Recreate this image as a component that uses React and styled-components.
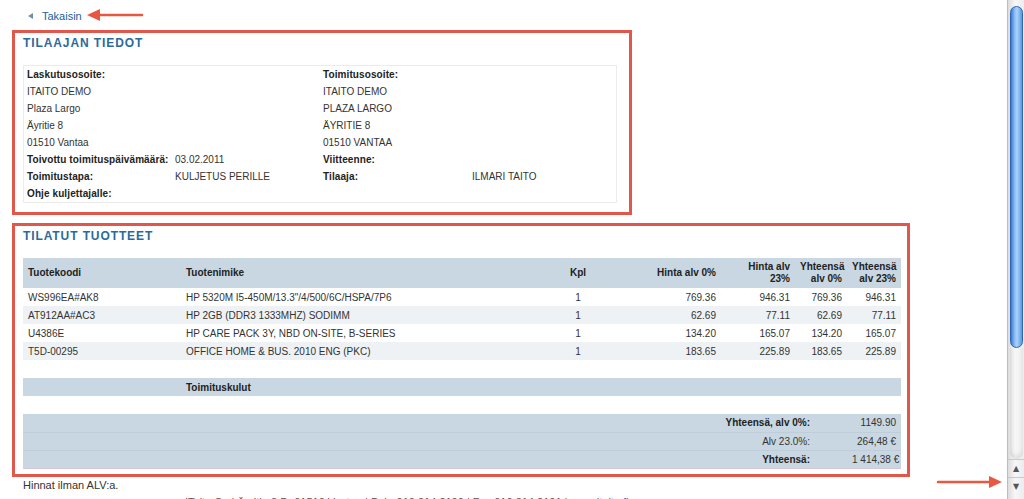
import React from 'react';
import styled, { createGlobalStyle } from 'styled-components';

const GlobalStyle = createGlobalStyle`
  html, body {
    margin: 0;
    padding: 0;
    background: #fff;
    overflow: hidden;
  }
  body {
    font-family: 'Liberation Sans', Arial, sans-serif;
    color: #2b2b2b;
  }
`;

const Screen = styled.div`
  position: relative;
  display: flex;
  width: 1024px;
  height: 499px;
  overflow: hidden;
`;

const Main = styled.div`
  flex: 1;
  padding: 9px 0 0 12px;
  overflow: hidden;
`;

const BackRow = styled.div`
  display: flex;
  align-items: center;
  height: 14px;
  padding-left: 16px;
  gap: 9px;
`;

const BackTriangle = styled.span`
  width: 0;
  height: 0;
  border-top: 3px solid transparent;
  border-bottom: 3px solid transparent;
  border-right: 5px solid #6f8fae;
`;

const BackLink = styled.a`
  font-size: 11px;
  color: #22609a;
  text-decoration: none;
`;

const Section = styled.section`
  width: ${(p) => p.$width}px;
  margin-top: ${(p) => p.$top}px;
  border: 3px solid #e2574b;
  padding: 0 0 ${(p) => p.$bottom}px 8px;
  box-sizing: border-box;
`;

const Heading = styled.h2`
  margin: 0;
  height: 32px;
  padding-top: 4px;
  box-sizing: border-box;
  font-size: 12px;
  font-weight: bold;
  letter-spacing: 0.9px;
  color: #2a6a9c;
  line-height: 12px;
`;

const InfoBox = styled.div`
  width: 594px;
  box-sizing: border-box;
  border: 1px solid #ececec;
  padding: 0 0 0 3px;
  display: grid;
  grid-template-columns: 148px 148px 149px 1fr;
  grid-auto-rows: 17px;
  align-items: center;
  font-size: 10px;
`;

const InfoCell = styled.div`
  white-space: nowrap;
  font-weight: ${(p) => (p.$bold ? 'bold' : 'normal')};
  letter-spacing: ${(p) => (p.$bold ? '0.1px' : '0')};
  color: ${(p) => (p.$bold ? '#222' : '#333')};
`;

const Table = styled.table`
  width: 878px;
  table-layout: fixed;
  border-collapse: collapse;
  font-size: 10px;
  color: #333;
`;

const HeadCell = styled.th`
  height: 30px;
  padding: 0 5px;
  background: #c8d7e1;
  font-weight: bold;
  color: #222;
  line-height: 12px;
  text-align: ${(p) => p.$align || 'left'};
  vertical-align: middle;
`;

const Row = styled.tr`
  height: 18px;
  background: ${(p) => (p.$tone === 'blue' ? '#c8d7e1' : p.$tone === 'light' ? '#eff2f5' : '#fff')};
  border-top: ${(p) => (p.$line ? '1px solid #bfcdd8' : 'none')};
  border-bottom: ${(p) => (p.$last ? '1px solid #d8c8df' : 'none')};
`;

const Cell = styled.td`
  padding: 0 ${(p) => p.$padRight || 5}px 0 5px;
  text-align: ${(p) => p.$align || 'left'};
  font-weight: ${(p) => (p.$bold ? 'bold' : 'normal')};
  color: ${(p) => (p.$bold ? '#222' : '#333')};
  white-space: nowrap;
  overflow: hidden;
`;

const Note = styled.div`
  margin: 1px 0 0 11px;
  font-size: 11px;
  line-height: 14px;
  color: #333;
`;

const Footer = styled.div`
  margin-top: 3px;
  padding-left: 173px;
  font-size: 11px;
  line-height: 14px;
  color: #555;
  white-space: nowrap;
`;

const FooterLink = styled.span`
  color: #2a5fa8;
`;

const ScrollBar = styled.div`
  width: 17px;
  height: 499px;
  display: flex;
  flex-direction: column;
  box-sizing: border-box;
  border-left: 1px solid #bdbdbd;
  background: linear-gradient(to right, #dcdcdc, #f7f7f7 45%, #ececec);
`;

const Thumb = styled.div`
  margin: 6px 1px 0 2px;
  height: 342px;
  border-radius: 7px;
  border: 1px solid #2f64b4;
  box-sizing: border-box;
  background: linear-gradient(to right, #3a78d2, #8fc0f4 35%, #a9d2fa 55%, #5b97e2);
`;

const Track = styled.div`
  flex: 1;
  margin: 0 1px 0 2px;
  border-radius: 0 0 7px 7px;
  box-shadow: inset 0 -4px 4px rgba(0, 0, 0, 0.08);
`;

const ArrowButton = styled.div`
  height: 17px;
  display: flex;
  align-items: center;
  justify-content: center;
  border-top: 1px solid #c9c9c9;
  font-size: 8px;
  color: #555;
  font-family: 'DejaVu Sans', sans-serif;
`;

const Annotation = styled.svg`
  position: absolute;
  left: ${(p) => p.$x}px;
  top: ${(p) => p.$y}px;
  overflow: visible;
`;

const info = [
  [['Laskutusosoite:', 1], null, ['Toimitusosoite:', 1], null],
  [['ITAITO DEMO'], null, ['ITAITO DEMO'], null],
  [['Plaza Largo'], null, ['PLAZA LARGO'], null],
  [['Äyritie 8'], null, ['ÄYRITIE 8'], null],
  [['01510 Vantaa'], null, ['01510 VANTAA'], null],
  [['Toivottu toimituspäivämäärä:', 1], ['03.02.2011'], ['Viitteenne:', 1], null],
  [['Toimitustapa:', 1], ['KULJETUS PERILLE'], ['Tilaaja:', 1], ['ILMARI TAITO']],
  [['Ohje kuljettajalle:', 1], null, null, null],
];

const products = [
  ['WS996EA#AK8', 'HP 5320M I5-450M/13.3"/4/500/6C/HSPA/7P6', '1', '769.36', '946.31', '769.36', '946.31'],
  ['AT912AA#AC3', 'HP 2GB (DDR3 1333MHZ) SODIMM', '1', '62.69', '77.11', '62.69', '77.11'],
  ['U4386E', 'HP CARE PACK 3Y, NBD ON-SITE, B-SERIES', '1', '134.20', '165.07', '134.20', '165.07'],
  ['T5D-00295', 'OFFICE HOME & BUS. 2010 ENG (PKC)', '1', '183.65', '225.89', '183.65', '225.89'],
];

const totals = [
  ['Yhteensä, alv 0%:', '1149.90', true],
  ['Alv 23.0%:', '264,48 €', false],
  ['Yhteensä:', '1 414,38 €', true],
];

const widths = [158, 374, 46, 120, 74, 52, 54];
const aligns = ['left', 'left', 'center', 'right', 'right', 'right', 'right'];

const Arrow = ({ x, y, length, dir }) => (
  <Annotation $x={x} $y={y} width={length} height="14" viewBox={`0 0 ${length} 14`}>
    <g transform={dir === 'right' ? `translate(${length} 0) scale(-1 1)` : undefined}>
      <line x1="8" y1="7" x2={length - 2} y2="7" stroke="#e8573f" strokeWidth="2.5" strokeLinecap="round" />
      <polygon points="0,7 13,1 13,13" fill="#e8573f" />
    </g>
  </Annotation>
);

const App = () => {
  return (
    <Screen>
      <GlobalStyle />
      <Main>
        <BackRow>
          <BackTriangle />
          <BackLink href="#back">Takaisin</BackLink>
        </BackRow>

        <Section $width={620} $top={7} $bottom={9}>
          <Heading>TILAAJAN TIEDOT</Heading>
          <InfoBox>
            {info.map((row, i) =>
              row.map((c, j) => (
                <InfoCell key={`${i}-${j}`} $bold={c && c[1]}>
                  {c ? c[0] : ''}
                </InfoCell>
              ))
            )}
          </InfoBox>
        </Section>

        <Section $width={898} $top={8} $bottom={5}>
          <Heading>TILATUT TUOTTEET</Heading>
          <Table>
            <colgroup>
              {widths.map((w, i) => (
                <col key={i} style={{ width: w }} />
              ))}
            </colgroup>
            <thead>
              <tr>
                <HeadCell>Tuotekoodi</HeadCell>
                <HeadCell>Tuotenimike</HeadCell>
                <HeadCell $align="center">Kpl</HeadCell>
                <HeadCell $align="right">Hinta alv 0%</HeadCell>
                <HeadCell $align="right">
                  Hinta alv
                  <br />
                  23%
                </HeadCell>
                <HeadCell $align="right">
                  Yhteensä
                  <br />
                  alv 0%
                </HeadCell>
                <HeadCell $align="right">
                  Yhteensä
                  <br />
                  alv 23%
                </HeadCell>
              </tr>
            </thead>
            <tbody>
              {products.map((p, i) => (
                <Row key={p[0]} $tone={i % 2 ? 'light' : 'white'}>
                  {p.map((v, j) => (
                    <Cell key={j} $align={aligns[j]}>
                      {v}
                    </Cell>
                  ))}
                </Row>
              ))}
              <Row>
                <Cell colSpan={7} />
              </Row>
              <Row $tone="blue">
                <Cell />
                <Cell $bold>Toimituskulut</Cell>
                <Cell colSpan={5} />
              </Row>
              <Row>
                <Cell colSpan={7} />
              </Row>
              {totals.map(([label, value, bold], i) => (
                <Row key={label} $tone="blue" $line={i > 0} $last={i === totals.length - 1}>
                  <Cell colSpan={6} $align="right" $bold={bold} $padRight={37}>
                    {label}
                  </Cell>
                  <Cell $align="right">{value}</Cell>
                </Row>
              ))}
            </tbody>
          </Table>
        </Section>

        <Note>Hinnat ilman ALV:a.</Note>
        <Footer>
          ITaito Oy | Äyritie 8 D, 01510 Vantaa | Puh. 010 314 2100 | Fax 010 314 2101 |{' '}
          <FooterLink>www.itaito.fi</FooterLink>
        </Footer>
      </Main>

      <ScrollBar>
        <Thumb />
        <Track />
        <ArrowButton>▲</ArrowButton>
        <ArrowButton>▼</ArrowButton>
        <div style={{ height: 4 }} />
      </ScrollBar>

      <Arrow x={87} y={8} length={57} dir="left" />
      <Arrow x={936} y={475} length={66} dir="right" />
    </Screen>
  );
};

export default App;
